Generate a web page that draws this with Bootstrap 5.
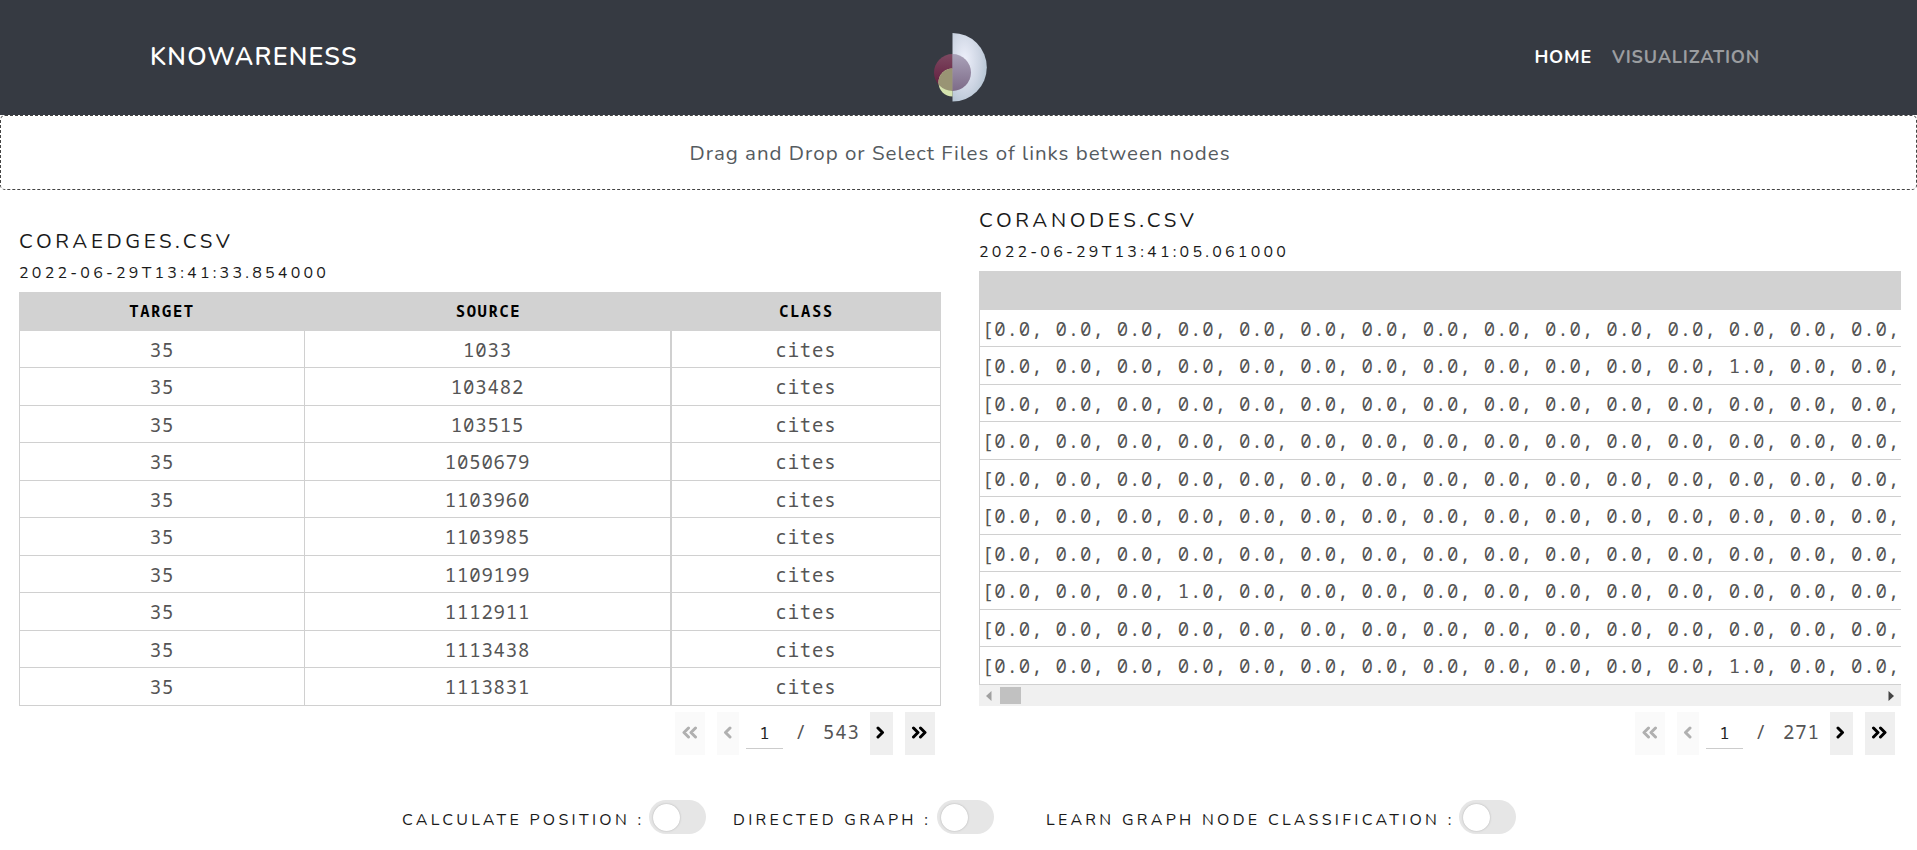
<!DOCTYPE html>
<html lang="en">
<head>
<meta charset="utf-8">
<title>Knowareness</title>
<link rel="stylesheet" href="https://cdn.jsdelivr.net/npm/bootstrap@5.3.0/dist/css/bootstrap.min.css">
<style>
body{font-family:Nunito,Lato,sans-serif;color:#1a1a1a;background:#fff;overflow:hidden;height:850px}
.topbar{height:115px;background:#363a42;padding:0 157px 0 150px}
.brand{font-size:25px;font-weight:600;line-height:30px;letter-spacing:1.25px;color:#fff;margin-top:42px}
.logo{left:925px;top:28px}
.menu{gap:20px;margin-top:45px}
.menu a{font-size:18px;line-height:24px;font-weight:700;letter-spacing:.8px;color:#9b9da0;text-decoration:none}
.menu a.active{color:#fff}
.dropzone{height:75px;border:1px dashed #444;border-radius:5px;font-size:20.500px;letter-spacing:1px;color:#555b5f;padding:2px 0 0 3px}
.panes{padding:0 16px 0 19px;height:565px;gap:38px}
.pane{width:922px}
.title{font-size:20.500px;line-height:28px;letter-spacing:3.6px;margin:0 0 6px}
.stamp{font-size:16px;line-height:24px;letter-spacing:3.23px;margin:0 0 7px}
.mono{font-family:Consolas,"Noto Sans Mono","DejaVu Sans Mono",monospace}
.grid-table{table-layout:fixed;border-collapse:separate;border-spacing:0;width:922px;margin:0}
.grid-table th{height:38.5px;background:#d2d2d2;font-size:15.500px;letter-spacing:1.6px;color:#000;text-align:center;padding:0;line-height:20px;vertical-align:middle}
.grid-table td{height:37.5px;border-bottom:1px solid #d0d0d0;border-right:1px solid #d0d0d0;padding:2px 0 0;text-align:center;font-size:19px;letter-spacing:.84px;line-height:22px;color:#555;vertical-align:middle;white-space:pre;overflow:hidden}
.grid-table td:first-child{border-left:1px solid #d0d0d0}
.grid-table.edges td:nth-child(2){border-right-width:2px}
.grid-table.wide th{height:39px}
.grid-table.wide td{text-align:left;padding-left:2px;border-right:0}
.hscroll{height:21px;background:#f0f0f0;padding:1px 7px 0}
.thumb{width:21px;height:17px;background:#c1c1c1;margin-left:8px}
.pager{height:43px;margin-top:6.5px;padding-right:6px;color:#555}
.pg{height:43px;background:#efefef;border:0;padding:0 1px 3px 0;color:#000}
.pg.off{background:#fafafa;color:#b0b0b0}
.pg svg{fill:none;stroke:currentColor;stroke-width:3;stroke-linecap:round;stroke-linejoin:round}
.w30{width:30px}
.w22{width:22.5px}
.pageno{width:37px;height:37px;border-bottom:1px solid #ccc;color:#222;font-size:16.500px;line-height:41px;margin-left:7px}
.pagetot{font-size:19px;letter-spacing:.83px;line-height:40px;width:87px}
.options{padding-left:402px;margin-top:45px;font-size:16px;letter-spacing:3.3px;height:34px}
.options label{line-height:24px;padding-top:8px;white-space:nowrap}
.switchbox{width:57px;height:34px;border-radius:17px;background:#e6e6e6;padding:3.5px}
.knob{width:27px;height:27px;border-radius:50%;background:#fff;box-shadow:0 0 2px #aaa}
</style>
</head>
<body>
<nav class="topbar d-flex align-items-start justify-content-between position-relative">
  <span class="brand">KNOWARENESS</span>
  <svg class="logo position-absolute" width="64" height="78" viewBox="0 0 64 78">
    <defs>
      <radialGradient id="shell" cx=".35" cy=".4" r=".8"><stop offset="0" stop-color="#eef0fb"/><stop offset=".55" stop-color="#cdd5e3"/><stop offset="1" stop-color="#a9bccb"/></radialGradient>
      <linearGradient id="plum" x1="0" y1="0" x2="0" y2="1"><stop offset="0" stop-color="#7d4961"/><stop offset="1" stop-color="#5e1538"/></linearGradient>
      <linearGradient id="haze" x1="0" y1="0" x2="0" y2="1"><stop offset="0" stop-color="#aaa2b9"/><stop offset="1" stop-color="#7d6b88"/></linearGradient>
      <clipPath id="lh"><rect width="27.5" height="78"/></clipPath>
      <clipPath id="rh"><rect x="27.5" width="37" height="78"/></clipPath>
      <clipPath id="plumdisc"><circle cx="27.5" cy="44.5" r="18.5"/></clipPath>
    </defs>
    <path d="M27.500 5a34.300 34.300 0 0 1 0 68.600z" fill="url(#shell)"/>
    <g clip-path="url(#lh)">
      <circle cx="27.500" cy="44.500" r="18.500" fill="url(#plum)"/>
      <circle cx="27.500" cy="54.500" r="14" fill="#d5e3ae"/>
      <g clip-path="url(#plumdisc)"><circle cx="27.500" cy="54.500" r="14" fill="#999474"/></g>
    </g>
    <g clip-path="url(#rh)"><circle cx="27.500" cy="44.500" r="18.500" fill="url(#haze)"/></g>
  </svg>
  <div class="menu d-flex"><a class="active" href="#">HOME</a><a href="#">VISUALIZATION</a></div>
</nav>
<div class="dropzone d-flex align-items-center justify-content-center">Drag and Drop or Select Files of links between nodes</div>

<main class="panes d-flex align-items-end">
  <section class="pane">
    <h5 class="title fw-normal">CORAEDGES.CSV</h5>
    <p class="stamp">2022-06-29T13:41:33.854000</p>
    <table class="grid-table edges mono">
      <colgroup><col style="width:286px"><col style="width:367px"><col></colgroup>
      <thead><tr><th>TARGET</th><th>SOURCE</th><th>CLASS</th></tr></thead>
      <tbody id="edges"></tbody>
    </table>
    <div class="pager mono d-flex justify-content-end"></div>
  </section>
  <section class="pane">
    <h5 class="title fw-normal">CORANODES.CSV</h5>
    <p class="stamp">2022-06-29T13:41:05.061000</p>
    <table class="grid-table wide mono">
      <thead><tr><th></th></tr></thead>
      <tbody id="nodes"></tbody>
    </table>
    <div class="hscroll d-flex align-items-center">
      <svg width="6" height="10"><path d="M5.500 0v10L0 5z" fill="#a0a0a0"/></svg>
      <div class="thumb"></div>
      <svg class="ms-auto" width="6" height="10"><path d="M.5 0v10L6 5z" fill="#444"/></svg>
    </div>
    <div class="pager mono d-flex justify-content-end"></div>
  </section>
</main>

<div class="options d-flex">
  <label style="width:247px">CALCULATE POSITION :</label><div class="switchbox"><div class="knob"></div></div>
  <label style="width:204px;margin-left:27px">DIRECTED GRAPH :</label><div class="switchbox"><div class="knob"></div></div>
  <label style="width:413px;margin-left:52px">LEARN GRAPH NODE CLASSIFICATION :</label><div class="switchbox"><div class="knob"></div></div>
</div>

<script src="https://cdn.jsdelivr.net/npm/bootstrap@5.3.0/dist/js/bootstrap.bundle.min.js"></script>
<script>
const sources = [1033, 103482, 103515, 1050679, 1103960, 1103985, 1109199, 1112911, 1113438, 1113831];
document.getElementById('edges').innerHTML =
  sources.map(s => `<tr><td>35</td><td>${s}</td><td>cites</td></tr>`).join('');

// row index -> position of the single non-zero feature
const ones = {1: 12, 7: 3, 9: 12};
document.getElementById('nodes').innerHTML = sources.map((_, r) => {
  const v = Array.from({length: 15}, (_, i) => ones[r] === i ? '1.0' : '0.0');
  return `<tr><td>[${v.join(', ')},</td></tr>`;
}).join('');

const one = d => `<svg width="9" height="13" viewBox="0 0 9 13"><path d="${d}"/></svg>`;
const two = d => `<svg width="17" height="13" viewBox="0 0 17 13"><path d="${d}"/></svg>`;
document.querySelectorAll('.pager').forEach((p, i) => {
  const b = 'pg d-flex align-items-center justify-content-center';
  p.innerHTML =
    `<button class="${b} off w30">${two('M7.500 2L3 6.500l4.500 4.500M14.500 2L10 6.500l4.500 4.500')}</button>
     <button class="${b} off w22" style="margin-left:11.500px">${one('M7 2L2.500 6.500L7 11')}</button>
     <div class="pageno text-center">1</div>
     <div class="pagetot d-flex justify-content-between"><span style="margin-left:12px">/</span><span style="width:47px">${[543, 271][i]}</span></div>
     <button class="${b} w22">${one('M2 2l4.500 4.500L2 11')}</button>
     <button class="${b} w30" style="margin-left:12.500px">${two('M2.500 2L7 6.500L2.500 11M9.500 2l4.500 4.500L9.500 11')}</button>`;
});
</script>
</body>
</html>
